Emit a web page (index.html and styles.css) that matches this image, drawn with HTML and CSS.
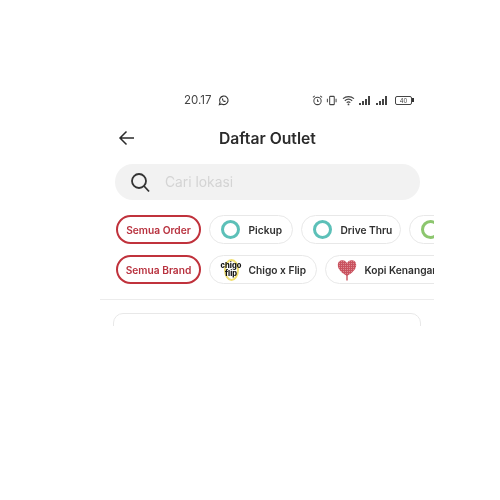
FILE: index.html
```html
<!DOCTYPE html>
<html lang="id">
<head>
    <meta charset="UTF-8">
    <meta name="viewport" content="width=device-width, initial-scale=1.0">
    <title>Daftar Outlet</title>
    <link rel="stylesheet" href="styles.css">
</head>
<body>
    <div class="screen">
        <div class="status-bar">
            <div class="status-left">
                <span class="clock">20.17</span>
                <svg class="wa" width="11" height="11" viewBox="0 0 24 24" fill="none" stroke="#333" stroke-width="2.4">
                    <path d="M3 21l1.5-5A9.3 9.3 0 1 1 8 19.6z"/>
                    <path d="M8.5 8c0 4 3.5 7.5 7.5 7.5l1-2.200-2.500-1.200-1 1c-1.200-.5-2.100-1.400-2.600-2.600l1-1-1.200-2.500z" fill="#333" stroke="none"/>
                </svg>
            </div>
            <div class="status-right">
                <svg width="11" height="11" viewBox="0 0 12 12" fill="none" stroke="#444" stroke-width="1.100">
                    <circle cx="6" cy="6.500" r="4"/>
                    <path d="M6 4.500v2.200h1.500M1 2.500L3 1M11 2.500L9 1"/>
                </svg>
                <svg width="11" height="11" viewBox="0 0 12 12" fill="none" stroke="#444" stroke-width="1.100">
                    <rect x="4" y="1.500" width="5" height="9" rx=".8"/>
                    <path d="M1.500 4v4M11 4v4"/>
                </svg>
                <svg class="wifi" width="13" height="11" viewBox="0 0 14 12" fill="none" stroke="#444" stroke-width="1.200">
                    <path d="M1 4c3.400-3 8.600-3 12 0M3 6.300c2.300-2 5.700-2 8 0M5 8.400c1.200-1 2.800-1 4 0"/>
                    <circle cx="7" cy="10.300" r="1" fill="#444" stroke="none"/>
                </svg>
                <span class="signal"><i class="b1"></i><i class="b2"></i><i class="b3"></i><i class="b4"></i></span>
                <span class="signal"><i class="b1"></i><i class="b2"></i><i class="b3"></i><i class="b4"></i></span>
                <span class="battery"><span class="battery-body">40</span><span class="battery-tip"></span></span>
            </div>
        </div>

        <div class="top-bar">
            <svg class="back" width="18" height="16" viewBox="0 0 18 16" fill="none" stroke="#2b2b2b" stroke-width="1.500">
                <path d="M16 8H2M8.500 1.500L2 8l6.500 6.500"/>
            </svg>
            <h1 class="title">Daftar Outlet</h1>
        </div>

        <div class="search">
            <svg width="21" height="21" viewBox="0 0 21 21" fill="none" stroke="#333" stroke-width="1.800">
                <circle cx="9" cy="9" r="7"/>
                <path d="M14 14l5 5.500"/>
            </svg>
            <span class="placeholder">Cari lokasi</span>
        </div>

        <div class="chip-row">
            <div class="chip chip-active">Semua Order</div>
            <div class="chip chip-pickup"><span class="ring"></span>Pickup</div>
            <div class="chip chip-drive"><span class="ring"></span>Drive Thru</div>
            <div class="chip chip-more"><span class="ring ring-green"></span></div>
        </div>

        <div class="chip-row">
            <div class="chip chip-active">Semua Brand</div>
            <div class="chip chip-chigo">
                <span class="chigo-logo"><span class="chigo-arc"></span><span class="chigo-text">chigo<br>flip</span></span>
                Chigo x Flip
            </div>
            <div class="chip chip-kopi">
                <svg width="20" height="22" viewBox="0 0 20 22">
                    <defs>
                        <pattern id="dots" width="2" height="2" patternUnits="userSpaceOnUse">
                            <rect width="2" height="2" fill="#c9525f"/>
                            <rect width="1" height="1" fill="#dd8b92"/>
                        </pattern>
                    </defs>
                    <path d="M10 17C5 14 .8 10.500 .8 6a4.800 4.800 0 0 1 9.200-1.900A4.800 4.800 0 0 1 19.200 6c0 4.500-4.200 8-9.200 11z" fill="url(#dots)"/>
                    <path d="M9.300 15h1.400v6.500H9.300z" fill="#c9525f"/>
                </svg>
                Kopi Kenangan
            </div>
        </div>

        <div class="divider"></div>
        <div class="card"></div>
    </div>
</body>
</html>
```

FILE: styles.css
```css
body {
    margin: 0;
    background: #fff;
    font-family: Inter, "Noto Sans", sans-serif;
    color: #2f2f2f;
}
.screen {
    width: 334px;
    height: 238px;
    margin: 88px 0 0 100px;
    overflow: hidden;
    filter: blur(0.5px);
}
.status-bar {
    display: flex;
    justify-content: space-between;
    align-items: center;
    height: 24px;
    padding: 0 20px 0 84px;
}
.status-left {
    display: flex;
    align-items: center;
    gap: 7px;
}
.clock {
    font-size: 11.500px;
    color: #444;
}
.status-right {
    display: flex;
    align-items: center;
    gap: 3px;
}
.wifi {
    margin-left: 2px;
}
.signal {
    display: flex;
    align-items: flex-end;
    gap: 1px;
    height: 9px;
    width: 13px;
    margin-left: 1px;
}
.signal i {
    display: block;
    width: 2px;
    background: #444;
}
.b1 { height: 2px; }
.b2 { height: 4px; }
.b3 { height: 6px; }
.b4 { height: 9px; }
.battery {
    display: flex;
    align-items: center;
    margin-left: 3px;
}
.battery-body {
    display: block;
    width: 15px;
    height: 7px;
    border: 1px solid #444;
    border-radius: 2px;
    font-size: 6px;
    line-height: 7px;
    text-align: center;
    color: #444;
}
.battery-tip {
    width: 2px;
    height: 4px;
    background: #333;
}
.top-bar {
    display: flex;
    align-items: center;
    height: 28px;
    margin-top: 12px;
    padding-left: 18px;
}
.title {
    margin: 0 0 0 83px;
    font-size: 15.700px;
    font-weight: 600;
    color: #2b2b2b;
}
.search {
    display: flex;
    align-items: center;
    gap: 14px;
    width: 305px;
    height: 36px;
    box-sizing: border-box;
    margin: 12px 0 0 15px;
    padding-left: 15px;
    background: #f2f2f2;
    border-radius: 18px;
}
.placeholder {
    font-size: 13.800px;
    color: #d4d4d4;
}
.chip-row {
    display: flex;
    gap: 8px;
    margin: 15px 0 0 16px;
}
.chip-row + .chip-row {
    margin-top: 11px;
}
.chip {
    display: flex;
    align-items: center;
    flex-shrink: 0;
    box-sizing: border-box;
    height: 29px;
    border: 1.500px solid #e8e8e8;
    border-radius: 15px;
    font-size: 10.200px;
    font-weight: 600;
    white-space: nowrap;
    background: #fff;
}
.chip-active {
    justify-content: center;
    width: 85px;
    border: 2px solid #c0323c;
    color: #b8323f;
}
.ring {
    display: block;
    flex-shrink: 0;
    width: 19px;
    height: 19px;
    box-sizing: border-box;
    border: 3.500px solid #5cc0b8;
    border-radius: 50%;
}
.ring-green {
    border-color: #8cc66e;
}
.chip-pickup {
    gap: 9px;
    width: 84px;
    padding-left: 10.500px;
}
.chip-drive {
    gap: 9px;
    width: 100px;
    padding-left: 10.500px;
}
.chip-more {
    width: 40px;
    padding-left: 11px;
}
.chip-chigo {
    gap: 6px;
    width: 108px;
    padding-left: 9.500px;
}
.chigo-logo {
    position: relative;
    display: block;
    width: 23px;
    height: 24px;
}
.chigo-arc {
    position: absolute;
    top: 1px;
    left: 4px;
    width: 15px;
    height: 22px;
    box-sizing: border-box;
    border: 2px solid #f0df70;
    border-radius: 50%;
}
.chigo-text {
    position: absolute;
    top: 4px;
    left: 0;
    width: 23px;
    font-size: 7.500px;
    font-weight: 800;
    line-height: 8px;
    text-align: center;
    color: #111;
}
.chip-kopi {
    gap: 8px;
    width: 130px;
    padding-left: 10.500px;
}
.divider {
    height: 1px;
    margin-top: 15px;
    background: #ececec;
}
.card {
    width: 308px;
    height: 40px;
    box-sizing: border-box;
    margin: 13px 0 0 13px;
    border: 1.500px solid #e8e8e8;
    border-radius: 10px;
}
```
